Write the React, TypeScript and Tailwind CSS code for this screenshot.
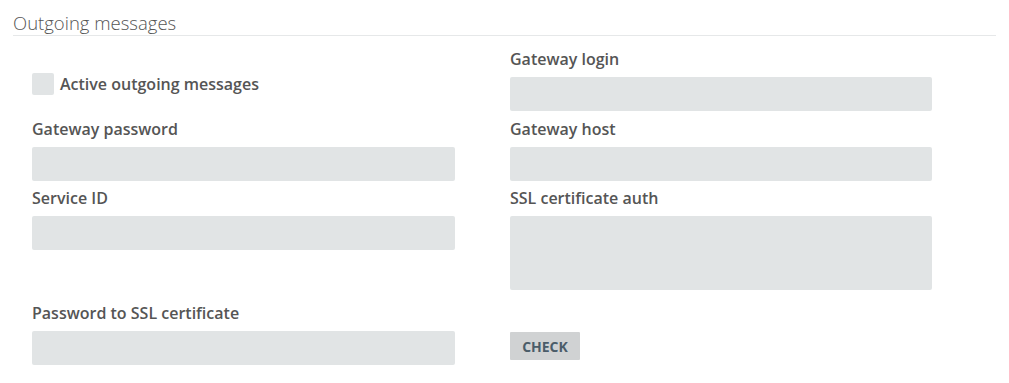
const labelCls = "block text-[16px] leading-[22px] font-semibold text-[#555555]";
const inputCls = "block w-full h-[34px] bg-[#e1e4e5] rounded-[2px] outline-none px-2 text-sm";

function Field({ label, textarea = false }: { label: string; textarea?: boolean }) {
  return (
    <div>
      <label className={labelCls}>{label}</label>
      {textarea ? (
        <textarea className="mt-[7px] block w-full h-[74px] bg-[#e1e4e5] rounded-[2px] outline-none px-2 text-sm resize-none" />
      ) : (
        <input type="text" className={`mt-[7px] ${inputCls}`} />
      )}
    </div>
  );
}

export default function App() {
  return (
    <div className="w-[1009px] h-[383px] bg-white font-['Open_Sans',sans-serif]">
      <div className="mx-[13px] pt-[10px] border-b border-[#e6e8e9]">
        <h2 className="text-[18.5px] leading-[25px] font-light text-[#555555]">Outgoing messages</h2>
      </div>
      <div className="grid grid-cols-[423px_422px] gap-x-[55px] gap-y-[6px] pl-[32px] pt-[12px]">
        <div className="pt-[25px]">
          <label className="flex items-center gap-[6px]">
            <span className="w-[22px] h-[22px] bg-[#e1e4e5] rounded-[2px]" />
            <span className="text-[16px] leading-[22px] font-semibold text-[#555555]">Active outgoing messages</span>
          </label>
        </div>
        <Field label="Gateway login" />
        <div className="mt-px">
          <Field label="Gateway password" />
        </div>
        <div className="mt-px">
          <Field label="Gateway host" />
        </div>
        <div className="self-start">
          <Field label="Service ID" />
        </div>
        <Field label="SSL certificate auth" textarea />
        <div className="mt-[6px]">
          <Field label="Password to SSL certificate" />
        </div>
        <div className="mt-[6px] pt-[30px]">
          <button className="w-[70px] h-[28px] bg-[#d0d2d3] text-[14px] font-bold text-[#4b5c69] uppercase rounded-[1px]">
            Check
          </button>
        </div>
      </div>
    </div>
  );
}
